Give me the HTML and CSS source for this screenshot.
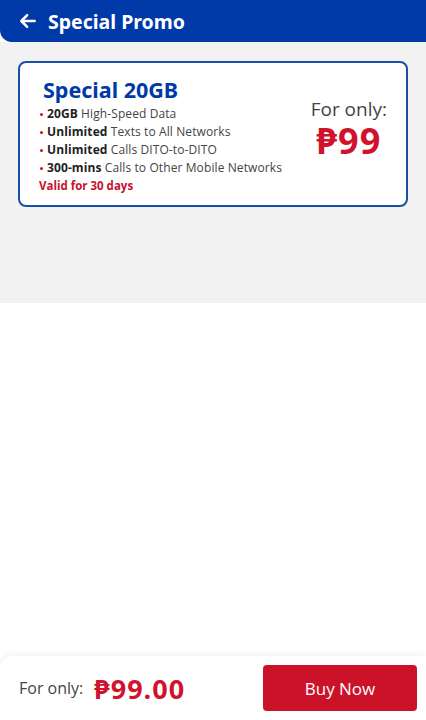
FILE: index.html
```html
<!DOCTYPE html>
<html lang="en">
<head>
    <meta charset="UTF-8">
    <meta name="viewport" content="width=device-width, initial-scale=1.0">
    <title>Special Promo</title>
    <link rel="stylesheet" href="styles.css">
</head>
<body>
    <header class="top-bar">
        <svg class="back-icon" viewBox="0 0 24 24" xmlns="http://www.w3.org/2000/svg">
            <path d="M20 12H5M11 5l-7 7 7 7"></path>
        </svg>
        <h1>Special Promo</h1>
    </header>

    <section class="promo-area">
        <div class="promo-card">
            <div class="promo-info">
                <h2>Special 20GB</h2>
                <ul class="perks">
                    <li><strong>20GB</strong> High-Speed Data</li>
                    <li><strong>Unlimited</strong> Texts to All Networks</li>
                    <li><strong>Unlimited</strong> Calls DITO-to-DITO</li>
                    <li><strong>300-mins</strong> Calls to Other Mobile Networks</li>
                </ul>
                <div class="validity">Valid for 30 days</div>
            </div>
            <div class="promo-price">
                <span class="price-label">For only:</span>
                <span class="price-value">₱99</span>
            </div>
        </div>
    </section>

    <footer class="buy-bar">
        <div class="total">
            <span class="total-label">For only:</span>
            <span class="total-value">₱99.00</span>
        </div>
        <button class="buy-button">Buy Now</button>
    </footer>
</body>
</html>
```

FILE: styles.css
```css
* {
    margin: 0;
    padding: 0;
    box-sizing: border-box;
}

body {
    font-family: 'Open Sans', 'Noto Sans', 'DejaVu Sans', sans-serif;
    height: 100vh;
    background-color: #ffffff;
    color: #333;
    display: flex;
    flex-direction: column;
}

.top-bar {
    height: 42px;
    background-color: #0039a8;
    border-bottom-left-radius: 12px;
    display: flex;
    align-items: center;
    padding-left: 18px;
    gap: 10px;
    color: white;
}

.back-icon {
    width: 20px;
    height: 20px;
    stroke: white;
    stroke-width: 3;
    fill: none;
    stroke-linecap: round;
    stroke-linejoin: round;
}

.top-bar h1 {
    font-family: 'Noto Sans', sans-serif;
    font-size: 19.5px;
    font-weight: 700;
}

.promo-area {
    background-color: #f2f2f2;
    height: 261px;
    padding: 19px 18px;
}

.promo-card {
    background-color: white;
    border: 2px solid #1b4ea6;
    border-radius: 8px;
    height: 146px;
    display: flex;
    justify-content: space-between;
    align-items: center;
    padding: 4px 19px 0 19px;
}

.promo-info h2 {
    font-family: 'Noto Sans', sans-serif;
    font-size: 21.5px;
    font-weight: 700;
    color: #0039a8;
    margin-left: 4px;
    line-height: 24px;
    margin-bottom: 3px;
}

.perks {
    list-style: none;
}

.perks li {
    font-size: 12px;
    line-height: 18px;
    color: #444;
    position: relative;
    padding-left: 8px;
    letter-spacing: 0.1px;
}

.perks li::before {
    content: '';
    position: absolute;
    left: 1px;
    top: 8px;
    width: 3px;
    height: 3px;
    border-radius: 50%;
    background-color: #c8102e;
}

.perks strong {
    color: #222;
}

.validity {
    font-size: 11.5px;
    font-weight: 700;
    line-height: 18px;
    color: #c8102e;
}

.promo-price {
    display: flex;
    flex-direction: column;
    align-items: center;
    margin-top: -16px;
}

.price-label {
    font-size: 19px;
    color: #444;
    line-height: 24px;
}

.price-value {
    font-size: 36px;
    font-weight: 700;
    color: #d0122c;
    line-height: 36px;
    letter-spacing: 1px;
    margin-top: 2px;
}

.buy-bar {
    margin-top: auto;
    height: 64px;
    background-color: white;
    border-top-left-radius: 12px;
    box-shadow: 0 -2px 6px rgba(0, 0, 0, 0.06);
    display: flex;
    justify-content: space-between;
    align-items: center;
    padding: 0 9px 0 19px;
}

.total {
    display: flex;
    align-items: center;
    gap: 11px;
}

.total-label {
    font-size: 16px;
    color: #444;
}

.total-value {
    font-size: 27px;
    font-weight: 700;
    color: #d0122c;
    letter-spacing: 1px;
}

.buy-button {
    width: 154px;
    height: 46px;
    background-color: #cc1228;
    color: white;
    border: none;
    border-radius: 4px;
    font-family: inherit;
    font-size: 17px;
}
```
